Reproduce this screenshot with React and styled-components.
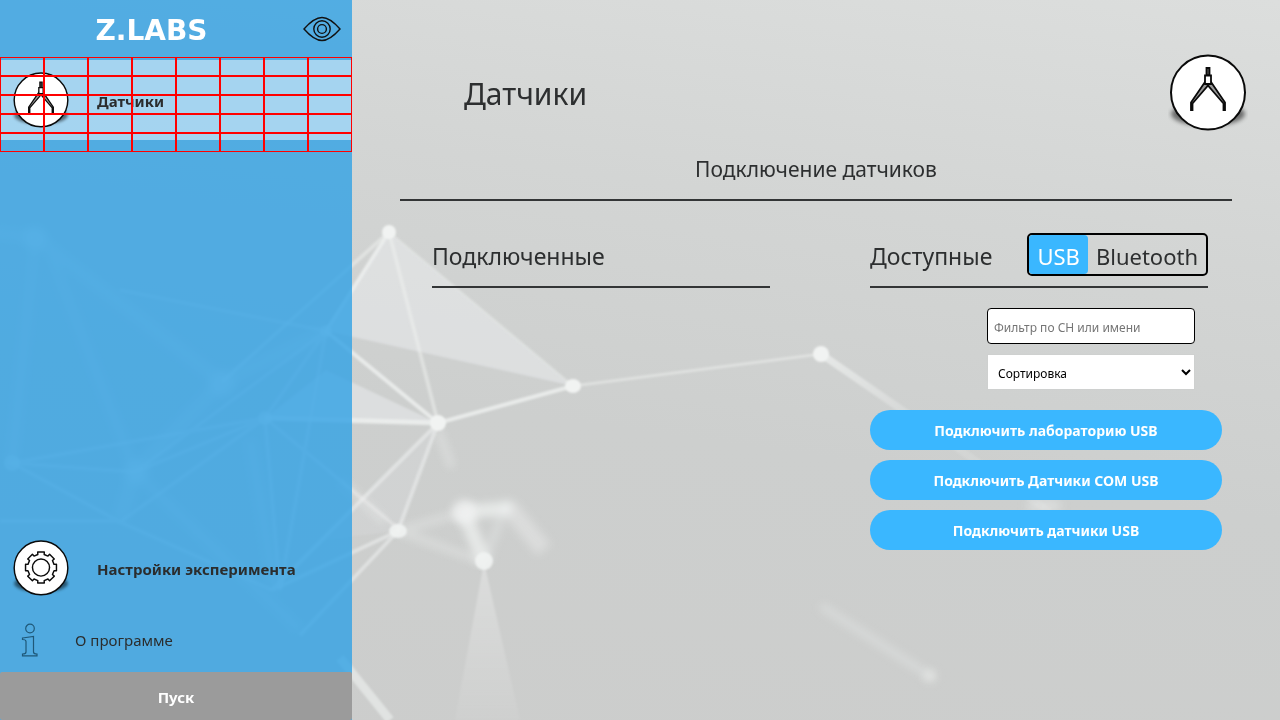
import React, { useState } from "react";
import styled, { createGlobalStyle, css } from "styled-components";

const GlobalStyle = createGlobalStyle`
  *, *::before, *::after { box-sizing: border-box; }
  html, body, #root { height: 100%; }
  body {
    margin: 0;
    color: #2d2f30;
    background: #cecfce;
    font-family: "Noto Sans", "Open Sans", sans-serif;
  }
  button, input, select { font-family: inherit; }
`;

const Page = styled.div`
  position: relative;
  z-index: 0;
  display: flex;
  min-height: 100%;
  overflow: hidden;
  background: linear-gradient(188deg, #dcdedd 0%, #d3d5d4 30%, #cdcfce 58%, #cccdcc 100%);
`;

const Backdrop = styled.svg`
  position: absolute;
  inset: 0;
  z-index: -1;
  width: 100%;
  height: 100%;
`;

const Sidebar = styled.aside`
  display: flex;
  flex-direction: column;
  width: 27.5%;
  background: rgba(49, 161, 229, 0.8);
`;

const SidebarHeader = styled.header`
  display: flex;
  align-items: center;
  height: 60px;
  padding: 0 11px 2px 0;
`;

const Logo = styled.span`
  flex: 1;
  padding-top: 4px;
  color: #fff;
  font: 700 28px/32px "DejaVu Sans", sans-serif;
  text-align: center;
`;

const EyeButton = styled.button`
  display: flex;
  padding: 0;
  border: 0;
  background: none;
`;

const Nav = styled.nav`
  flex: 1;
  display: flex;
  flex-direction: column;
`;

const NavLink = styled.a`
  position: relative;
  display: flex;
  align-items: center;
  gap: 27px;
  height: 80px;
  padding: 2px 12px 0;
  color: #2b2d2e;
  font-size: 15px;
  font-weight: 700;
  line-height: 20px;
  text-decoration: none;
  ${(p) => p.$active && css`background: rgba(255, 255, 255, 0.48);`}
  ${(p) => p.$bottom && css`margin-top: auto;`}
  ${(p) =>
    p.$plain &&
    css`
      gap: 36px;
      height: 64px;
      padding: 0 21px;
      font-weight: 400;
    `}
`;

const GridOverlay = styled.div`
  position: absolute;
  inset: -3px 0 -12px;
  display: grid;
  grid-template: repeat(5, 1fr) / repeat(8, 1fr);
  pointer-events: none;
`;

const GridCell = styled.span`
  border: 1px solid #f00;
`;

const StartButton = styled.button`
  height: 48px;
  padding: 2px 0 0;
  border: 0;
  border-radius: 2px;
  background: #9b9b9b;
  color: #fff;
  font-size: 15px;
  font-weight: 700;
`;

const Main = styled.main`
  flex: 1;
  min-width: 0;
`;

const MainHeader = styled.header`
  display: flex;
  align-items: center;
  justify-content: space-between;
  padding: 54px 32px 0 112px;
`;

const Title = styled.h1`
  margin: 0;
  font-size: 30px;
  font-weight: 400;
  line-height: 40px;
`;

const SectionTitle = styled.h2`
  margin: 16px 48px 0;
  padding: 3px 0 14px;
  border-bottom: 2px solid #333536;
  font-size: 21px;
  font-weight: 400;
  line-height: 32px;
  text-align: center;
`;

const Columns = styled.div`
  display: grid;
  grid-template-columns: 1fr 1fr;
  gap: 100px;
  margin: 0 72px 0 80px;
`;

const ColumnHeader = styled.div`
  display: flex;
  align-items: center;
  justify-content: space-between;
  height: 87px;
  padding-top: 22px;
  border-bottom: 2px solid #333536;
`;

const ColumnTitle = styled.h3`
  margin: 0;
  padding-top: 2px;
  font-size: 23px;
  font-weight: 400;
  line-height: 32px;
`;

const Switch = styled.div`
  display: flex;
  height: 43px;
  border: 2px solid #000;
  border-radius: 5px;
`;

const SwitchOption = styled.button`
  padding: 2px 8px 0;
  border: 0;
  border-radius: 4px;
  background: ${(p) => (p.$on ? "#3ab7ff" : "transparent")};
  color: ${(p) => (p.$on ? "#fff" : "#2d2f30")};
  font-size: 22px;
  font-weight: 400;
  line-height: 32px;
`;

const Filters = styled.div`
  display: flex;
  flex-direction: column;
  align-items: flex-end;
  gap: 10px;
  padding: 20px 13px;
`;

const SearchInput = styled.input`
  width: 208px;
  height: 36px;
  padding: 2px 6px 0;
  border: 1px solid #000;
  border-radius: 4px;
  background: #fff;
  font-size: 12px;
  &::placeholder { color: #757575; }
`;

const SortSelect = styled.select`
  width: 208px;
  height: 36px;
  padding: 2px 0 0 6px;
  border: 1px solid #ced0cf;
  border-radius: 0;
  background: #fff;
  color: #000;
  font-size: 12px;
`;

const Actions = styled.div`
  display: flex;
  flex-direction: column;
  gap: 10px;
  margin-right: -14px;
`;

const ActionButton = styled.button`
  height: 40px;
  padding: 0 16px;
  border: 0;
  border-radius: 20px;
  background: #3ab7ff;
  color: #fff;
  font-size: 14px;
  font-weight: 700;
`;

function Badge({ size, children }) {
  const id = `badge-shadow-${size}`;
  return (
    <svg width={size} height={size} viewBox="0 0 80 80" fill="none" aria-hidden="true">
      <defs>
        <filter id={id} x="-20%" y="-40%" width="140%" height="180%">
          <feGaussianBlur stdDeviation="2" />
        </filter>
      </defs>
      <ellipse cx="40" cy="60" rx="37" ry="12" fill="#000" opacity="0.5" filter={`url(#${id})`} />
      <circle cx="40" cy="38.500" r="37" fill="#fff" stroke="#0a0a0a" strokeWidth="2" />
      {children}
    </svg>
  );
}

function Compass() {
  return (
    <g fill="#999" stroke="#0a0a0a" strokeWidth="1.800" strokeLinejoin="miter">
      <path d="M37 28 23 48.500V56h1.500v-6.500L40 31.500z" />
      <path d="M43 28 57 48.500V56h-1.500v-6.500L40 31.500z" />
      <path d="M38.500 14h3v7.500h-3z" fill="#555" />
      <path d="M37 21.500h6v8.500h-6z" fill="#fff" />
    </g>
  );
}

const TEETH = 8;
const gearPath = (() => {
  const points = [];
  for (let i = 0; i < TEETH; i += 1) {
    const mid = (i * 2 * Math.PI) / TEETH;
    [[-0.24, 18.5], [-0.21, 21.8], [0.21, 21.8], [0.24, 18.5]].forEach(([a, r]) => {
      points.push(`${(40 + r * Math.sin(mid + a)).toFixed(2)} ${(38 - r * Math.cos(mid + a)).toFixed(2)}`);
    });
  }
  return `M${points.join("L")}Z`;
})();

function Gear() {
  return (
    <g stroke="#0a0a0a" strokeWidth="2" strokeLinejoin="round">
      <path d={gearPath} />
      <circle cx="40" cy="38" r="11.800" />
    </g>
  );
}

function Eye() {
  return (
    <svg width="38" height="26" viewBox="0 0 38 26" fill="none" stroke="#111" strokeWidth="1.400" aria-hidden="true">
      <path d="M1 13C8 5 13 1.500 19 1.500S30 5 37 13C30 21 25 24.500 19 24.500S8 21 1 13z" />
      <circle cx="19" cy="13" r="8.200" />
      <circle cx="19" cy="13" r="4.400" />
    </svg>
  );
}

function Info() {
  return (
    <svg width="18" height="34" viewBox="0 0 18 34" fill="none" stroke="#1f5878" strokeWidth="1.200" aria-hidden="true">
      <circle cx="9" cy="5.500" r="4.300" />
      <path d="M1.500 15 12.500 13.500V29c0 1.500 1 2 3.500 2v1.800H1.500V31C4 31 5 30.500 5 29V18.500c0-1.500-1-2-3.500-2z" />
    </svg>
  );
}

function Network() {
  return (
    <Backdrop viewBox="0 0 1280 720" preserveAspectRatio="xMidYMid slice" aria-hidden="true">
      <defs>
        <filter id="soft" x="-5%" y="-5%" width="110%" height="110%"><feGaussianBlur stdDeviation="1" /></filter>
        <filter id="haze" x="-10%" y="-10%" width="120%" height="120%"><feGaussianBlur stdDeviation="4" /></filter>
        <linearGradient id="fade" x1="0" y1="0" x2="0" y2="1">
          <stop offset="0" stopColor="#fff" stopOpacity="0.300" />
          <stop offset="1" stopColor="#fff" stopOpacity="0.050" />
        </linearGradient>
        <linearGradient id="trail" gradientUnits="userSpaceOnUse" x1="821" y1="354" x2="1060" y2="515">
          <stop offset="0" stopColor="#f0f2f1" stopOpacity="0.700" />
          <stop offset="0.400" stopColor="#f0f2f1" stopOpacity="0.220" />
          <stop offset="1" stopColor="#f0f2f1" stopOpacity="0.120" />
        </linearGradient>
      </defs>
      <g fill="#eceeef" filter="url(#soft)">
        <path d="M389 232 573 386 326 331z" opacity="0.500" />
        <path d="M326 370 438 423 265 418z" opacity="0.500" />
        <path d="M438 423 398 531 320 540z" opacity="0.150" />
      </g>
      <path d="M484 562 520 720H455z" fill="url(#fade)" filter="url(#soft)" />
      <g stroke="#eef0ef" fill="none" opacity="0.350" filter="url(#haze)">
        <path strokeWidth="14" d="M-20 232 35 237 222 382 135 472 120 520M222 382 326 331" />
        <path strokeWidth="9" d="M35 237 12 463M45 240 135 472 300 630M250 440 275 590M438 430 452 468" />
        <path strokeWidth="9" d="M398 531 484 562M398 531 464 512M340 480 385 522" />
      </g>
      <g stroke="#eff1f0" fill="none" filter="url(#haze)">
        <path strokeWidth="14" opacity="0.750" d="M464 512 484 562M464 512 512 508" />
        <path strokeWidth="18" opacity="0.400" d="M508 506 544 550" />
        <path strokeWidth="8" opacity="0.350" d="M821 606 930 676M484 562 508 500" />
      </g>
      <g stroke="#eff1f0" strokeWidth="4" fill="none" filter="url(#soft)">
        <path opacity="0.800" d="M389 232 326 331 438 423 573 386" />
        <path opacity="0.500" strokeWidth="4" d="M389 232 438 423M389 232 222 382" />
        <path opacity="0.300" strokeWidth="3" d="M389 232 573 386" />
        <path opacity="0.500" strokeWidth="3" d="M573 386 821 354" />
        <path opacity="0.800" strokeWidth="5" d="M438 423 265 418" />
        <path opacity="0.550" d="M438 423 272 590M438 423 398 531 272 590M398 531 300 635" />
        <path opacity="0.400" d="M326 331 265 418 12 463 120 522 265 418 135 472 12 463M326 331 280 590 265 418 400 530M326 331 135 472M326 331 120 290M120 522 272 590M0 521H120" />
        <path opacity="0.600" strokeWidth="9" d="M340 658 390 720" />
      </g>
      <path d="M821 354 1050 512" stroke="url(#trail)" strokeWidth="7" filter="url(#soft)" />
      <g fill="#f1f3f2" filter="url(#soft)">
        <circle cx="389" cy="232" r="7" />
        <ellipse cx="573" cy="386" rx="8" ry="7" />
        <circle cx="821" cy="354" r="8" />
        <circle cx="438" cy="423" r="8" />
        <ellipse cx="398" cy="531" rx="9" ry="7" opacity="0.900" />
        <circle cx="484" cy="561" r="9" opacity="0.900" />
        <circle cx="326" cy="331" r="6" opacity="0.500" />
        <circle cx="265" cy="418" r="7" opacity="0.500" />
        <circle cx="12" cy="463" r="8" opacity="0.500" />
      </g>
      <g fill="#f1f3f2" filter="url(#haze)">
        <circle cx="35" cy="238" r="12" opacity="0.500" />
        <circle cx="222" cy="384" r="13" opacity="0.500" />
        <circle cx="136" cy="472" r="12" opacity="0.500" />
        <circle cx="464" cy="512" r="12" opacity="0.800" />
        <circle cx="930" cy="676" r="6" opacity="0.600" />
        <ellipse cx="1044" cy="506" rx="18" ry="7" opacity="0.400" />
      </g>
    </Backdrop>
  );
}

const ACTIONS = ["Подключить лабораторию USB", "Подключить Датчики COM USB", "Подключить датчики USB"];

export default function App() {
  const [mode, setMode] = useState("USB");
  return (
    <>
      <GlobalStyle />
      <Page>
        <Network />
        <Sidebar>
          <SidebarHeader>
            <Logo>Z.LABS</Logo>
            <EyeButton type="button" aria-label="Режим для слабовидящих"><Eye /></EyeButton>
          </SidebarHeader>
          <Nav>
            <NavLink href="#sensors" $active aria-current="page">
              <Badge size={58}><Compass /></Badge>
              Датчики
              <GridOverlay aria-hidden="true">
                {Array.from({ length: 40 }, (_, i) => <GridCell key={i} />)}
              </GridOverlay>
            </NavLink>
            <NavLink href="#settings" $bottom>
              <Badge size={58}><Gear /></Badge>
              Настройки эксперимента
            </NavLink>
            <NavLink href="#about" $plain>
              <Info />
              О программе
            </NavLink>
          </Nav>
          <StartButton type="button">Пуск</StartButton>
        </Sidebar>
        <Main>
          <MainHeader>
            <Title>Датчики</Title>
            <Badge size={80}><Compass /></Badge>
          </MainHeader>
          <SectionTitle>Подключение датчиков</SectionTitle>
          <Columns>
            <section>
              <ColumnHeader>
                <ColumnTitle>Подключенные</ColumnTitle>
              </ColumnHeader>
            </section>
            <section>
              <ColumnHeader>
                <ColumnTitle>Доступные</ColumnTitle>
                <Switch role="group" aria-label="Тип подключения">
                  {["USB", "Bluetooth"].map((name) => (
                    <SwitchOption
                      key={name}
                      type="button"
                      $on={mode === name}
                      aria-pressed={mode === name}
                      onClick={() => setMode(name)}
                    >
                      {name}
                    </SwitchOption>
                  ))}
                </Switch>
              </ColumnHeader>
              <Filters>
                <SearchInput type="text" aria-label="Фильтр" placeholder="Фильтр по СН или имени" />
                <SortSelect aria-label="Сортировка" defaultValue="">
                  <option value="">Сортировка</option>
                </SortSelect>
              </Filters>
              <Actions>
                {ACTIONS.map((label) => <ActionButton key={label} type="button">{label}</ActionButton>)}
              </Actions>
            </section>
          </Columns>
        </Main>
      </Page>
    </>
  );
}
